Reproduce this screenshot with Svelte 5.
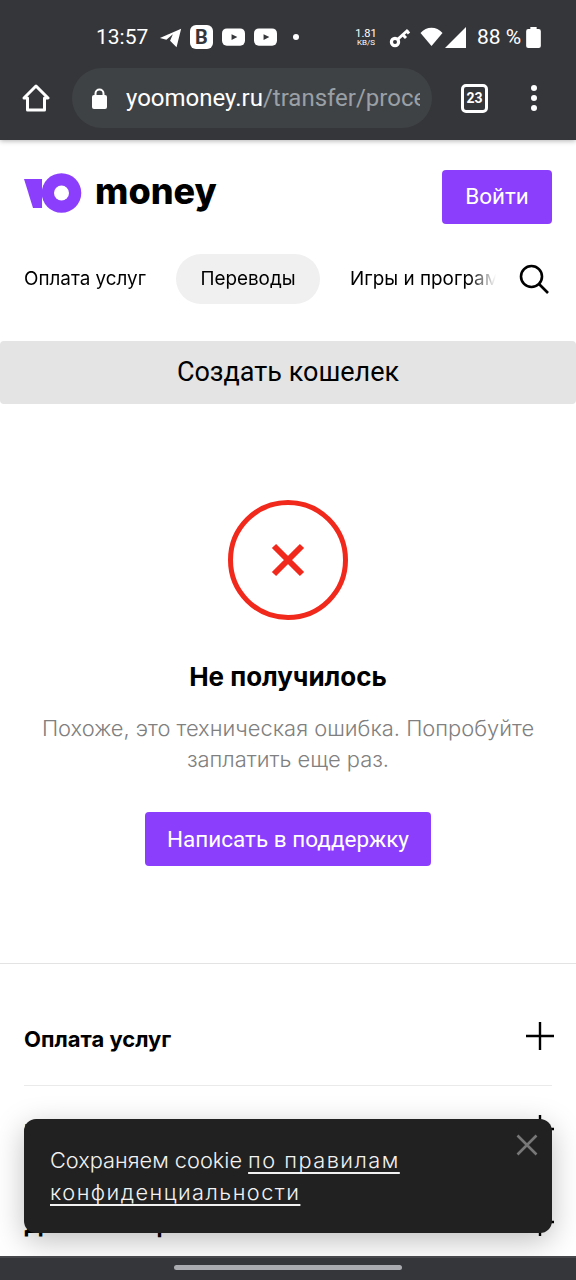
<script>
  const sections = ['Оплата услуг', 'Переводы', 'Игры и программы'];
  const footerRows = ['Оплата услуг', 'Переводы', 'Деньги и карта'];
</script>

<div class="phone">
  <div class="chrome">
    <div class="status">
      <span class="time">13:57</span>
      <svg class="tg" width="24" height="24" viewBox="0 0 26 24"><path d="M1 13 24 3 19 23 12 16 15 9 8 15Z" fill="#fff"/></svg>
      <span class="vk">B</span>
      <svg class="yt" width="23" height="20" viewBox="0 0 24 20"><rect y="1" width="24" height="18" rx="5" fill="#fff"/><path d="M10 7l6 3-6 3z" fill="#35363a"/></svg>
      <svg class="yt" width="23" height="20" viewBox="0 0 24 20"><rect y="1" width="24" height="18" rx="5" fill="#fff"/><path d="M10 7l6 3-6 3z" fill="#35363a"/></svg>
      <span class="dot"></span>
      <span class="speed"><b>1.81</b><i>KB/S</i></span>
      <svg class="key" width="22" height="22" viewBox="0 0 22 22"><circle cx="6" cy="16" r="3.6" fill="none" stroke="#fff" stroke-width="3.2"/><path d="M8.500 13.500 19 4M14 9l3 3M18 5l2 2.500" fill="none" stroke="#fff" stroke-width="3"/></svg>
      <svg class="wifi" width="23" height="20" viewBox="0 0 22 20"><path d="M0 6C6-1 16-1 22 6L11 19Z" fill="#fff"/></svg>
      <svg class="signal" width="21" height="21" viewBox="0 0 20 20"><path d="M20 0V20H0Z" fill="#fff"/></svg>
      <span class="batt-text">88 %</span>
      <svg class="batt" width="15" height="21" viewBox="0 0 14 20"><path d="M4 0h6v2h2a2 2 0 0 1 2 2v14a2 2 0 0 1-2 2H2a2 2 0 0 1-2-2V4a2 2 0 0 1 2-2h2z" fill="#fff"/></svg>
    </div>
    <div class="toolbar">
      <svg class="home" width="28" height="28" viewBox="0 0 28 28"><path d="M2 14 14 2l12 12h-3.500v12h-17V14Z" fill="none" stroke="#fff" stroke-width="3" stroke-linejoin="round"/></svg>
      <div class="omnibox">
        <svg width="15" height="21" viewBox="0 0 15 21"><path d="M3.500 9V5.500a4 4 0 0 1 8 0V9" fill="none" stroke="#fff" stroke-width="2"/><rect y="7" width="15" height="14" rx="2" fill="#fff"/></svg>
        <span class="url">yoomoney.ru<span class="path">/transfer/process</span></span>
      </div>
      <span class="tabs">23</span>
      <span class="menu"><i></i><i></i><i></i></span>
    </div>
  </div>

  <main>
    <header>
      <div class="logo">
        <svg width="58" height="40" viewBox="0 0 58 40"><path d="M0 6H18V35H9Z" fill="#8b3ffd"/><circle cx="37.500" cy="20" r="19.800" fill="#8b3ffd"/><circle cx="37.500" cy="20" r="7.500" fill="#fff"/></svg>
        <span class="word">money</span>
      </div>
      <button class="primary login">Войти</button>
    </header>

    <nav>
      <div class="tabs-row">
        {#each sections as s, i}
          <span class="tab" class:active={i === 1}>{s}</span>
        {/each}
      </div>
      <svg class="search" width="32" height="32" viewBox="0 0 32 32"><circle cx="13.500" cy="13.500" r="10.500" fill="none" stroke="#000" stroke-width="2.600"/><path d="M21 21l9 9" stroke="#000" stroke-width="2.600"/></svg>
    </nav>

    <div class="create">Создать кошелек</div>

    <section class="error">
      <svg width="120" height="120" viewBox="0 0 120 120"><circle cx="60" cy="60" r="57.500" fill="none" stroke="#f0291c" stroke-width="5"/><path d="M46 46l28 28M74 46 46 74" stroke="#f0291c" stroke-width="6"/></svg>
      <h2>Не получилось</h2>
      <p>Похоже, это техническая ошибка. Попробуйте заплатить еще раз.</p>
      <button class="primary support">Написать в поддержку</button>
    </section>

    <div class="footer-list">
      {#each footerRows as row}
        <div class="row"><span>{row}</span><svg width="28" height="28" viewBox="0 0 28 28"><path d="M14 0v28M0 14h28" stroke="#000" stroke-width="2.400"/></svg></div>
      {/each}
    </div>
  </main>

  <div class="cookie">
    <p>Сохраняем cookie <a href="#top">по правилам конфиденциальности</a></p>
    <svg class="close" width="22" height="22" viewBox="0 0 22 22"><path d="M1.500 1.500l19 19M20.500 1.500l-19 19" stroke="#777" stroke-width="2.600"/></svg>
  </div>

  <div class="navbar"><span></span></div>
</div>

<style>
  :global(body) {
    margin: 0;
    background: #fff;
  }

  .phone {
    position: relative;
    width: 576px;
    height: 1280px;
    overflow: hidden;
    font-family: Inter, "Noto Sans", sans-serif;
    color: #000;
  }

  .chrome {
    height: 140px;
    background: #35363a;
    color: #fff;
    font-family: Roboto, sans-serif;
    box-sizing: border-box;
    padding-top: 24px;
    box-shadow: 0 1px 5px rgba(0, 0, 0, 0.3);
    position: relative;
  }

  .status {
    display: flex;
    align-items: center;
    height: 26px;
    padding-left: 96px;
  }

  .time {
    font-size: 21px;
    width: 50px;
    margin-right: 13px;
  }

  .tg {
    margin-right: 7px;
  }

  .vk {
    width: 23px;
    height: 24px;
    background: #fff;
    border-radius: 6px;
    color: #35363a;
    font: 700 20px/24px Roboto, sans-serif;
    text-align: center;
    margin-right: 9px;
  }

  .yt {
    margin-right: 9px;
  }

  .dot {
    width: 6px;
    height: 6px;
    border-radius: 50%;
    background: #fff;
    margin-left: 7px;
    margin-right: 56px;
  }

  .speed {
    width: 22px;
    display: flex;
    flex-direction: column;
    align-items: center;
    line-height: 1;
    margin-right: 12px;
  }

  .speed b {
    font-size: 11px;
    font-weight: 400;
  }

  .speed i {
    font-size: 8px;
    font-style: normal;
  }

  .key {
    margin-right: 9px;
  }

  .signal {
    margin-left: 2px;
    margin-right: 11px;
  }

  .batt-text {
    font-size: 21px;
    margin-right: 5px;
  }

  .toolbar {
    display: flex;
    align-items: center;
    height: 60px;
    margin-top: 18px;
    padding-left: 22px;
  }

  .omnibox {
    display: flex;
    align-items: center;
    width: 360px;
    height: 60px;
    box-sizing: border-box;
    margin-left: 22px;
    padding-left: 20px;
    border-radius: 30px;
    background: #3f4245;
  }

  .url {
    width: 294px;
    margin-left: 19px;
    overflow: hidden;
    white-space: nowrap;
    font-size: 24px;
    color: #fff;
  }

  .path {
    color: #9aa0a6;
  }

  .tabs {
    width: 21px;
    height: 23px;
    margin-left: 29px;
    border: 3px solid #fff;
    border-radius: 5px;
    font-size: 14px;
    font-weight: 700;
    line-height: 23px;
    text-align: center;
  }

  .menu {
    display: flex;
    flex-direction: column;
    gap: 4px;
    margin-left: 43px;
  }

  .menu i {
    width: 6px;
    height: 6px;
    background: #fff;
    border-radius: 50%;
  }

  main {
    display: flex;
    flex-direction: column;
  }

  header {
    display: flex;
    justify-content: space-between;
    align-items: flex-start;
    padding: 30px 24px 0;
  }

  .logo {
    display: flex;
    align-items: center;
    gap: 13px;
    margin-top: 3px;
  }

  .word {
    font: 800 36px/40px Inter, sans-serif;
    margin-top: -5px;
  }

  .primary {
    border: 0;
    border-radius: 4px;
    background: #8b3ffd;
    color: #fff;
    font-family: Roboto, sans-serif;
    font-size: 22.500px;
  }

  .login {
    width: 110px;
    height: 54px;
    padding-bottom: 3px;
  }

  nav {
    display: flex;
    align-items: center;
    height: 50px;
    margin-top: 30px;
    padding-left: 24px;
    position: relative;
  }

  .tabs-row {
    display: flex;
    align-items: center;
    gap: 30px;
    width: 472px;
    overflow: hidden;
    white-space: nowrap;
    font-size: 18.850px;
    -webkit-mask-image: linear-gradient(to right, #000 445px, transparent 472px);
    mask-image: linear-gradient(to right, #000 445px, transparent 472px);
  }

  .tab {
    line-height: 50px;
    flex: none;
  }

  .tab.active {
    padding: 0 24.500px;
    border-radius: 25px;
    background: #f0f0f0;
  }

  .search {
    margin-left: 22px;
  }

  .create {
    height: 63px;
    margin-top: 37px;
    border-radius: 4px;
    background: #e4e4e4;
    font-family: Roboto, sans-serif;
    font-size: 27px;
    line-height: 63px;
    text-align: center;
  }

  .error {
    display: flex;
    flex-direction: column;
    align-items: center;
    padding: 96px 24px 97px;
    border-bottom: 1px solid #e3e3e3;
  }

  h2 {
    margin: 40px 0 0;
    font-size: 26px;
    line-height: 34px;
    font-weight: 700;
  }

  .error p {
    margin: 19px 0 0;
    color: #808080;
    font-size: 21.900px;
    font-weight: 300;
    line-height: 31px;
    text-align: center;
  }

  .support {
    width: 286px;
    height: 54px;
    margin-top: 37px;
  }

  .footer-list {
    padding: 29px 24px 0;
  }

  .row {
    display: flex;
    justify-content: space-between;
    align-items: center;
    height: 92px;
    border-bottom: 1px solid #eaeaea;
    font-size: 22px;
    font-weight: 700;
  }

  .row svg {
    margin-right: -2px;
    margin-top: -6px;
  }

  .cookie {
    position: absolute;
    left: 24px;
    top: 1119px;
    width: 528px;
    height: 114px;
    box-sizing: border-box;
    padding: 25px 26px;
    border-radius: 12px;
    background: #212121;
    box-shadow: 0 8px 30px rgba(0, 0, 0, 0.25);
    color: #f2f2f2;
  }

  .cookie p {
    margin: 0;
    font-size: 21.750px;
    font-weight: 300;
    line-height: 32px;
    width: 410px;
  }

  .cookie a {
    color: inherit;
    letter-spacing: 1.480px;
    text-underline-offset: 4px;
  }

  .close {
    position: absolute;
    right: 14px;
    top: 15px;
  }

  .navbar {
    position: absolute;
    left: 0;
    right: 0;
    bottom: 0;
    height: 24px;
    background: #35363a;
    border-top: 2px solid #47484c;
    display: flex;
    justify-content: center;
    padding-top: 7px;
    box-sizing: border-box;
  }

  .navbar span {
    width: 228px;
    height: 5px;
    border-radius: 3px;
    background: #a9abb1;
  }
</style>
